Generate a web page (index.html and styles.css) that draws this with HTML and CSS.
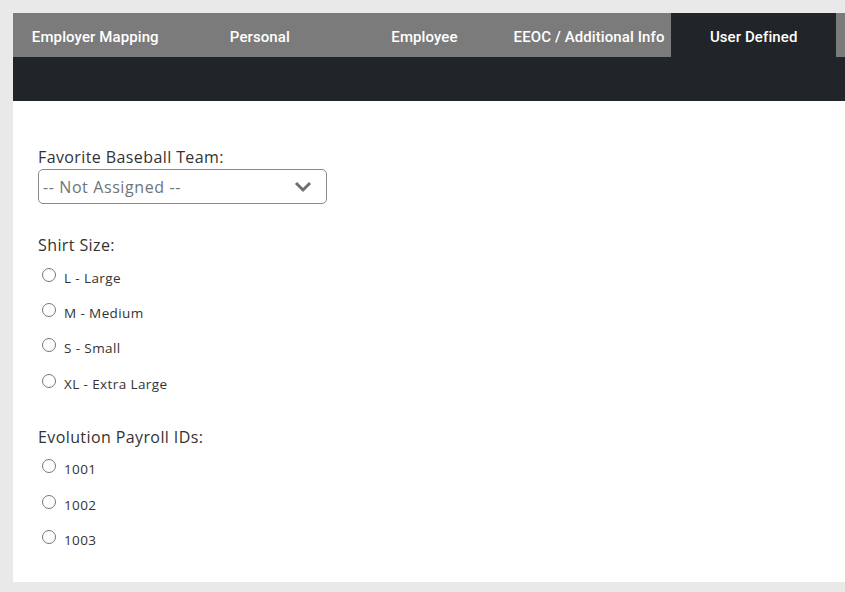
FILE: index.html
```html
<!DOCTYPE html>
<html lang="en">
<head>
  <meta charset="UTF-8">
  <title>User Defined</title>
  <link rel="stylesheet" href="styles.css">
</head>
<body>
  <div class="page">
    <nav class="tabs">
      <div class="tab">Employer Mapping</div>
      <div class="tab">Personal</div>
      <div class="tab">Employee</div>
      <div class="tab">EEOC / Additional Info</div>
      <div class="tab active">User Defined</div>
      <div class="tab"></div>
    </nav>
    <div class="band"></div>

    <div class="panel">
      <div class="field first">
        <label class="field-label" for="team">Favorite Baseball Team:</label>
        <div class="select" id="team">
          <span>-- Not Assigned --</span>
          <svg width="18" height="12" viewBox="0 0 18 12">
            <path d="M2 2 L9 9 L16 2" fill="none" stroke="#6f6f6f" stroke-width="3"/>
          </svg>
        </div>
      </div>

      <div class="field">
        <div class="field-label group">Shirt Size:</div>
        <label class="option"><input type="radio" name="shirt"> L - Large</label>
        <label class="option"><input type="radio" name="shirt"> M - Medium</label>
        <label class="option"><input type="radio" name="shirt"> S - Small</label>
        <label class="option"><input type="radio" name="shirt"> XL - Extra Large</label>
      </div>

      <div class="field">
        <div class="field-label group">Evolution Payroll IDs:</div>
        <label class="option"><input type="radio" name="ids"> 1001</label>
        <label class="option"><input type="radio" name="ids"> 1002</label>
        <label class="option"><input type="radio" name="ids"> 1003</label>
      </div>
    </div>
  </div>
</body>
</html>
```

FILE: styles.css
```css
body {
  margin: 0;
  background-color: #e9e9e9;
  font-family: "Open Sans", Arial, sans-serif;
  color: #333;
}

.page {
  margin: 13px 0 0 13px;
  overflow: hidden;
}

.tabs {
  display: flex;
  height: 44px;
  background-color: #7b7b7b;
  overflow: hidden;
}

.tab {
  width: 164.6px;
  flex-shrink: 0;
  display: flex;
  align-items: center;
  justify-content: center;
  padding-top: 3px;
  box-sizing: border-box;
  color: #fff;
  font-family: "Roboto", sans-serif;
  font-weight: 500;
  font-size: 15px;
  letter-spacing: 0.1px;
  white-space: nowrap;
}

.tab.active {
  background-color: #212429;
}

.band {
  height: 44px;
  background-color: #212429;
}

.panel {
  background: #fff;
  padding: 44px 25px 24px;
  display: flex;
  flex-direction: column;
  gap: 23px;
}

.field {
  display: flex;
  flex-direction: column;
}

.field.first {
  margin-bottom: 6px;
}

.field-label {
  font-size: 16px;
  line-height: 24px;
  letter-spacing: 0.4px;
  color: #333;
}

.field-label.group {
  margin-bottom: 3px;
}

.select {
  width: 269px;
  height: 33px;
  border: 1px solid #8a8a8a;
  border-radius: 5px;
  display: flex;
  align-items: center;
  justify-content: space-between;
  padding: 0 14px 0 4px;
  color: #6c757d;
  font-size: 16px;
  letter-spacing: 0.6px;
}

.option {
  display: flex;
  align-items: center;
  height: 35.4px;
  font-size: 13.5px;
  letter-spacing: 0.4px;
  color: #333;
  gap: 8px;
}

.option input {
  margin: 0 0 6px 4px;
  width: 14px;
  height: 14px;
}
```
